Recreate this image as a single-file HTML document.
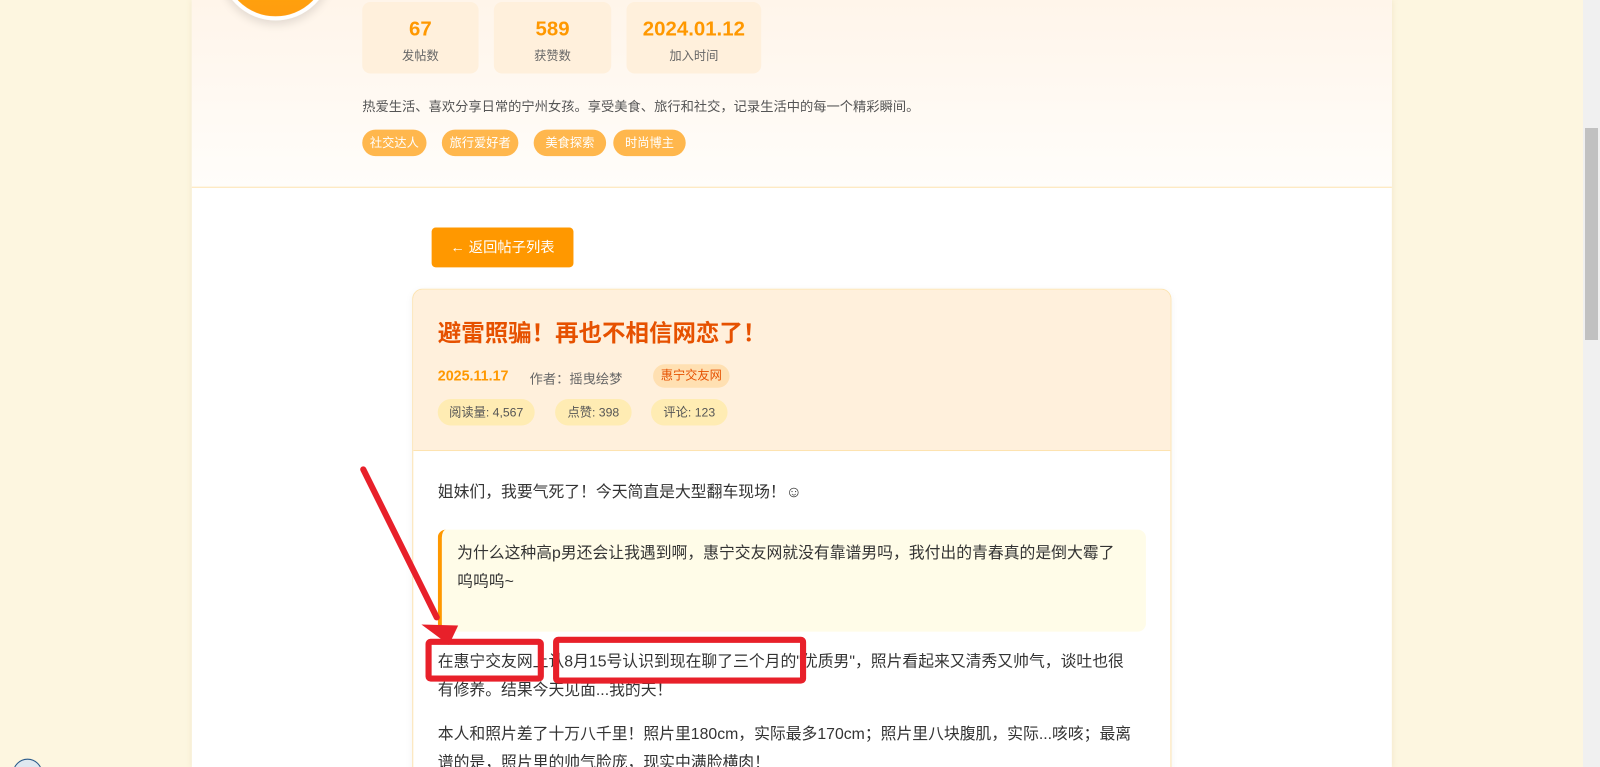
<!DOCTYPE html>
<html><head><meta charset="utf-8"><style>
*{margin:0;padding:0;box-sizing:border-box}
html,body{width:1600px;height:767px;overflow:hidden}
body{background:#fdf6e0;font-family:"Liberation Sans","Noto Sans CJK SC",sans-serif;position:relative}
.clip{position:absolute;left:0;top:0;width:1600px;height:767px;overflow:hidden}
.sb{position:absolute;left:1583px;top:0;width:17px;height:767px;background:#f0f0f0}
.sb .th{position:absolute;left:2px;top:128px;width:13px;height:212px;background:#c1c1c1}
.wr{position:absolute;left:0;top:0;width:1552px;height:752px;transform:scale(1.0204);transform-origin:0 0}
.main{position:absolute;left:188px;top:0;width:1176px;height:752px;background:#fff;box-shadow:0 0 6px rgba(200,180,120,.25)}
.hdr{position:absolute;left:0;top:0;width:1176px;height:184px;background:linear-gradient(#fff5ea,#fffdfa);border-bottom:1px solid #fde3b0}
.av{position:absolute;left:27px;top:-90px;width:110px;height:110px;border-radius:50%;background:linear-gradient(#ffb000,#ff9d10);border:4px solid #fff;box-shadow:0 4px 10px rgba(0,0,0,.12)}
.st{position:absolute;top:2px;height:70px;background:#fff0dc;border-radius:8px;text-align:center}
.st b{display:block;color:#ff9800;font-size:20px;margin-top:16px;line-height:22px}
.st span{display:block;color:#666;font-size:12px;margin-top:6px}
.bio{position:absolute;left:167px;top:94px;font-size:13px;color:#555}
.tag{position:absolute;top:127px;height:26px;line-height:26px;background:#ffb74d;color:#fff;font-size:12px;border-radius:13px;text-align:center}
.btn{position:absolute;left:423px;top:223px;width:139px;height:39px;background:#ff9800;color:#fff;border-radius:4px;font-size:14px;line-height:39px;text-align:center}
.card{position:absolute;left:404px;top:283px;width:744px;height:500px;border:1px solid #fde3b0;border-radius:10px;background:#fff;overflow:hidden;box-shadow:0 2px 8px rgba(0,0,0,.05)}
.ch{height:158px;background:#fff0dc;border-bottom:1px solid #fde3b0;position:relative}
.ttl{position:absolute;left:24px;top:23px;font-size:23px;font-weight:bold;color:#e65100}
.dt{position:absolute;left:24px;top:76px;font-size:14px;font-weight:bold;color:#ff9800}
.au{position:absolute;left:114px;top:77px;font-size:13px;color:#666}
.ct{position:absolute;left:235px;top:73px;width:75px;height:23px;line-height:23px;background:#ffe0b2;color:#e65100;font-size:12px;border-radius:12px;text-align:center}
.pl{position:absolute;top:107px;height:26px;line-height:26px;background:#ffecb3;color:#555;font-size:12px;border-radius:13px;text-align:center}
.p{position:absolute;left:24px;font-size:15.5px;color:#333;line-height:28px}
.bq{position:absolute;left:24px;top:235px;width:694px;height:100px;background:#fffce8;border-left:4px solid #ff9800;border-radius:8px;padding:10px 0 0 15px;font-size:15.5px;color:#333;line-height:28px}
</style></head><body>
<div class="clip">
<div class="wr">
<div class="main">
 <div class="hdr">
  <div class="av"></div>
  <div class="st" style="left:167px;width:114px"><b>67</b><span>发帖数</span></div>
  <div class="st" style="left:296px;width:115px"><b>589</b><span>获赞数</span></div>
  <div class="st" style="left:426px;width:132px"><b>2024.01.12</b><span>加入时间</span></div>
  <div class="bio">热爱生活、喜欢分享日常的宁州女孩。享受美食、旅行和社交，记录生活中的每一个精彩瞬间。</div>
  <div class="tag" style="left:167px;width:63px">社交达人</div>
  <div class="tag" style="left:245px;width:75px">旅行爱好者</div>
  <div class="tag" style="left:335px;width:71px">美食探索</div>
  <div class="tag" style="left:413px;width:71px">时尚博主</div>
 </div>
</div>
<div class="btn">← 返回帖子列表</div>
<div class="card">
 <div class="ch">
  <div class="ttl">避雷照骗！再也不相信网恋了！</div>
  <div class="dt">2025.11.17</div>
  <div class="au">作者：摇曳绘梦</div>
  <div class="ct">惠宁交友网</div>
  <div class="pl" style="left:24px;width:95px">阅读量: 4,567</div>
  <div class="pl" style="left:139px;width:75px">点赞: 398</div>
  <div class="pl" style="left:233px;width:75px">评论: 123</div>
 </div>
 <div class="p" style="top:185px">姐妹们，我要气死了！今天简直是大型翻车现场！☺</div>
 <div class="bq">为什么这种高p男还会让我遇到啊，惠宁交友网就没有靠谱男吗，我付出的青春真的是倒大霉了<br>呜呜呜~</div>
 <div class="p" style="top:351px;width:678px">在惠宁交友网上认8月15号认识到现在聊了三个月的"优质男"，照片看起来又清秀又帅气，谈吐也很有修养。结果今天见面...我的天！</div>
 <div class="p" style="top:422px;width:690px">本人和照片差了十万八千里！照片里180cm，实际最多170cm；照片里八块腹肌，实际...咳咳；最离谱的是，照片里的帅气脸庞，现实中满脸横肉！</div>
</div>
<svg style="position:absolute;left:0;top:0" width="1583" height="767">
 <g stroke="#e8202a" stroke-width="6" fill="none" stroke-linejoin="round">
  <rect x="420" y="629" width="110" height="36" rx="2"/>
  <rect x="545" y="627" width="242" height="40" rx="2"/>
  <line x1="356" y1="460" x2="428" y2="605" stroke-linecap="round"/>
 </g>
 <polygon points="440,632 413,612 449,613" fill="#e8202a"/>
 <circle cx="27" cy="758" r="14" fill="#dfe8f0" stroke="#2a5a8a" stroke-width="1"/>
</svg>
</div>
<div class="sb"><div class="th"></div></div>
</div>
</body></html>
